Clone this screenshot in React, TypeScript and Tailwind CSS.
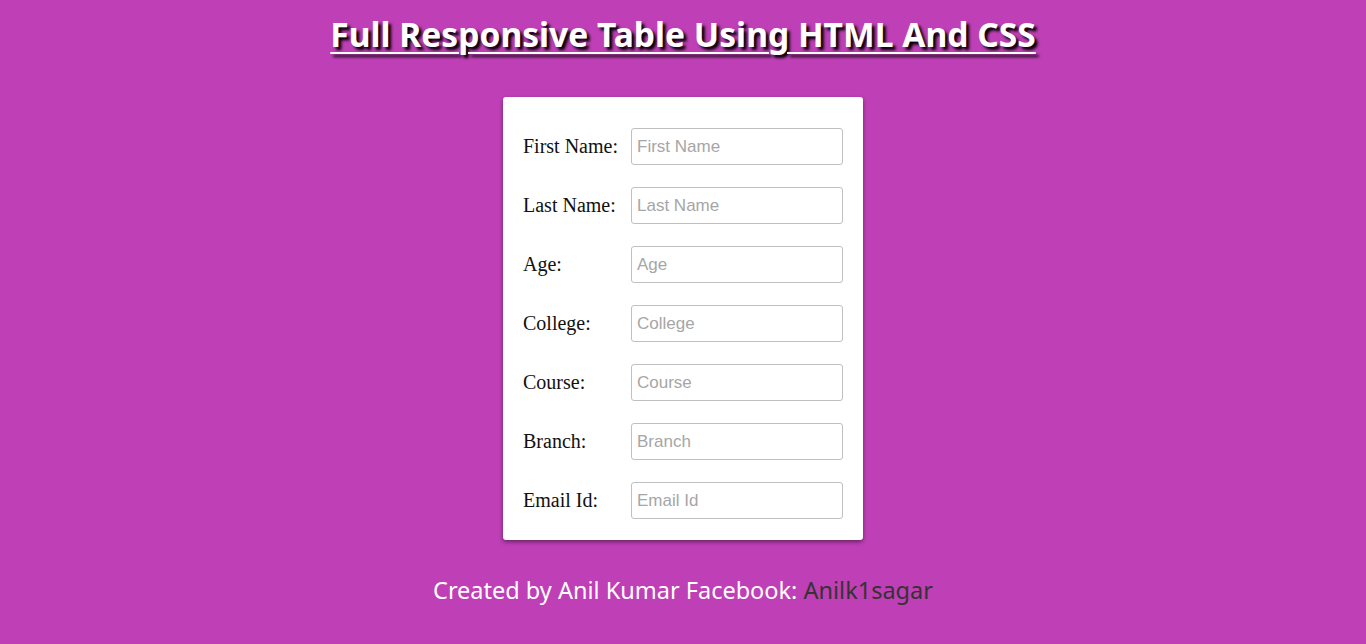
import React from "react";

const fields = [
  ["First Name:", "First Name"],
  ["Last Name:", "Last Name"],
  ["Age:", "Age"],
  ["College:", "College"],
  ["Course:", "Course"],
  ["Branch:", "Branch"],
  ["Email Id:", "Email Id"],
];

export default function App() {
  return (
    <div className="min-h-[644px] w-full bg-[#bf3fb6] flex flex-col items-center font-['Noto_Sans',sans-serif]">
      <h1 className="mt-[12px] text-[33.6px] leading-[44px] font-bold text-white underline decoration-[2px] underline-offset-[5px] [text-shadow:3px_3px_3px_#000]">
        Full Responsive Table Using HTML And CSS
      </h1>
      <div className="mt-[41px] w-[360px] bg-white rounded-[3px] shadow-[0_2px_4px_rgba(0,0,0,0.45)] pt-[31px] pb-[21px] px-[20px] flex flex-col gap-[22px]">
        {fields.map(([label, ph]) => (
          <div key={label} className="flex items-center">
            <label className="w-[108px] text-[20px] text-[#111] font-['Liberation_Serif',serif] -mt-[1px]">{label}</label>
            <input
              placeholder={ph}
              className="w-[212px] h-[37px] border border-[#c0c0c0] rounded-[3px] px-[5px] text-[17px] font-['Liberation_Sans',sans-serif] placeholder:text-[#a6a6a6] outline-none"
            />
          </div>
        ))}
      </div>
      <p className="mt-[33px] text-[23.5px] text-white">
        Created by Anil Kumar Facebook: <span className="text-[#333]">Anilk1sagar</span>
      </p>
    </div>
  );
}
